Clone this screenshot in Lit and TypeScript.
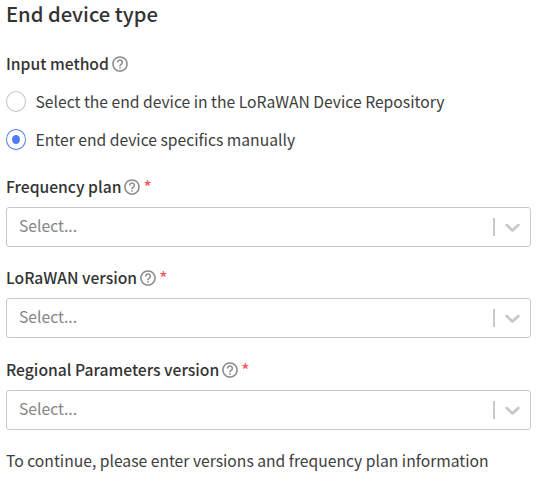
import { LitElement, html, css } from "lit";
import { customElement, property } from "lit/decorators.js";

@customElement("help-icon")
class HelpIcon extends LitElement {
  static styles = css`
    :host { display: block; width: 16px; height: 16px; }
    .icon { display: block; }
  `;
  render() {
    return html`<svg class="icon" width="16" height="16" viewBox="0 0 24 24" fill="#8a8a8a">
      <path d="M11 18h2v-2h-2v2zm1-16C6.48 2 2 6.48 2 12s4.48 10 10 10 10-4.48 10-10S17.52 2 12 2zm0 18c-4.41 0-8-3.59-8-8s3.590-8 8-8 8 3.590 8 8-3.590 8-8 8zm0-14c-2.210 0-4 1.790-4 4h2c0-1.100.9-2 2-2s2 .9 2 2c0 2-3 1.750-3 5h2c0-2.250 3-2.500 3-5 0-2.210-1.790-4-4-4z" transform="translate(-2.100 -2.100) scale(1.175)"></path>
    </svg>`;
  }
}

@customElement("field-label")
class FieldLabel extends LitElement {
  @property() text = "";
  @property({ type: Boolean }) required = false;
  static styles = css`
    :host { display: flex; align-items: center; height: 20px; font-weight: 500; white-space: nowrap; line-height: 20px; }
    .help { margin-left: 3px; }
    .star { color: #f4585e; margin-left: 3px; font-size: 17px; }
  `;
  render() {
    return html`<span>${this.text}</span><help-icon class="help"></help-icon>
      ${this.required ? html`<span class="star">*</span>` : ""}`;
  }
}

@customElement("radio-option")
class RadioOption extends LitElement {
  @property() text = "";
  @property({ type: Boolean }) checked = false;
  static styles = css`
    :host { display: flex; align-items: center; gap: 9.5px; height: 21px; line-height: 21px; white-space: nowrap; color: #3d3d3d; }
    .ring { box-sizing: border-box; width: 20px; height: 21px; border: 1px solid #c4c4c4; border-radius: 50%; display: grid; place-items: center; }
    .on { border-color: #4f7df5; }
    .dot { width: 8px; height: 9px; border-radius: 50%; background: #4f7df5; }
  `;
  render() {
    return html`<span class="ring ${this.checked ? "on" : ""}">${this.checked ? html`<span class="dot"></span>` : ""}</span>
      <span>${this.text}</span>`;
  }
}

@customElement("select-box")
class SelectBox extends LitElement {
  static styles = css`
    :host { display: flex; align-items: center; box-sizing: border-box; height: 40px; border: 1px solid #c8c8c8; border-radius: 3px; color: #858585; line-height: 20px; }
    .value { flex: 1; padding: 0 0 2px 12px; }
    .bar { width: 2px; height: 18px; background: #c8c8c8; }
    .chevron { display: block; margin: 0 5px; }
  `;
  render() {
    return html`<span class="value">Select...</span><span class="bar"></span>
      <svg class="chevron" width="25" height="24" viewBox="0 0 20 20" preserveAspectRatio="none" fill="#c8c8c8">
        <path d="M4.516 7.548c0.436-0.446 1.043-0.481 1.576 0l3.908 3.747 3.908-3.747c0.533-0.481 1.141-0.446 1.574 0 0.436 0.445 0.408 1.197 0 1.615-0.406 0.418-4.695 4.502-4.695 4.502-0.217 0.223-0.502 0.335-0.787 0.335s-0.570-0.112-0.789-0.335c0 0-4.287-4.084-4.695-4.502s-0.436-1.170 0-1.615z"></path>
      </svg>`;
  }
}

@customElement("app-root")
class AppRoot extends LitElement {
  static styles = css`
    :host { display: block; box-sizing: border-box; height: 487px; padding: 0 20px 0 6px; background: #fff; color: #333; font: 15.68px/20px "Noto Sans CJK SC", "Noto Sans", sans-serif; overflow: hidden; }
    .title { margin: 0 0 26px; height: 28px; font-size: 20.2px; line-height: 28px; font-weight: 500; }
    .options { display: grid; gap: 17px; margin: 17px 0 27px; }
    .field { display: grid; gap: 10px; margin-bottom: 21px; }
    .wide { margin-bottom: 22px; }
    .note { margin: 0; white-space: nowrap; color: #3d3d3d; }
  `;
  render() {
    return html`
      <h1 class="title">End device type</h1>
      <field-label text="Input method"></field-label>
      <div class="options">
        <radio-option text="Select the end device in the LoRaWAN Device Repository"></radio-option>
        <radio-option text="Enter end device specifics manually" checked></radio-option>
      </div>
      <div class="field"><field-label text="Frequency plan" required></field-label><select-box></select-box></div>
      <div class="field wide"><field-label text="LoRaWAN version" required></field-label><select-box></select-box></div>
      <div class="field"><field-label text="Regional Parameters version" required></field-label><select-box></select-box></div>
      <p class="note">To continue, please enter versions and frequency plan information</p>
    `;
  }
}
